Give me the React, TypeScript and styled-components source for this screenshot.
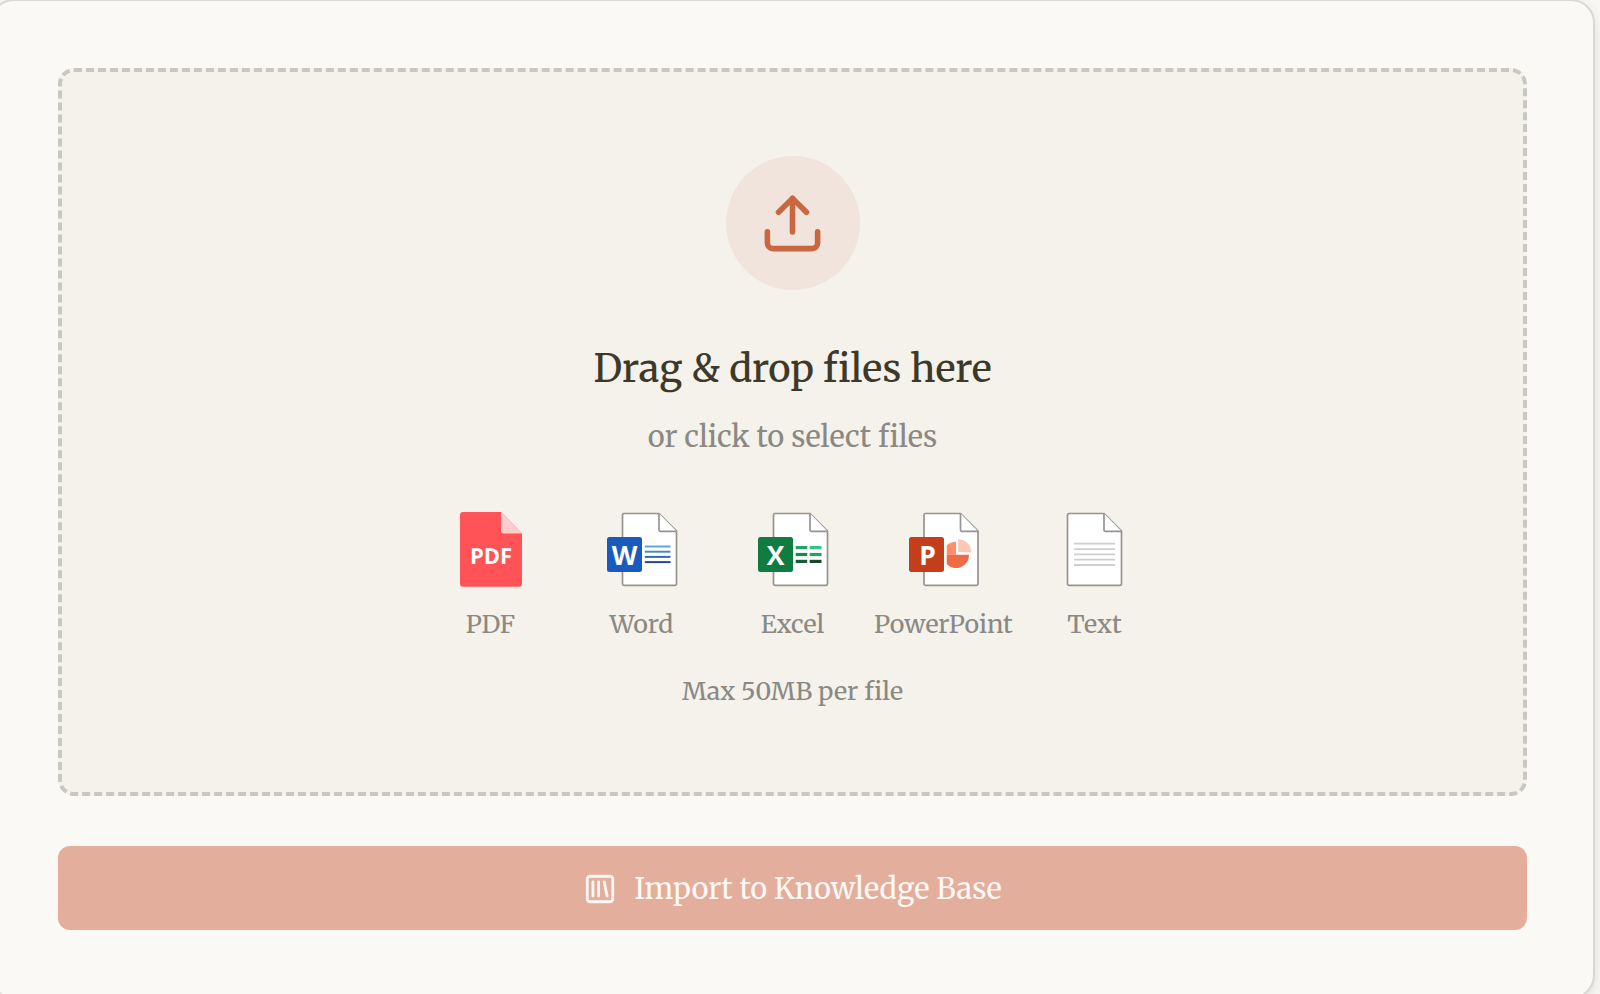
import React, { useState } from "react";
import styled, { createGlobalStyle } from "styled-components";
import { SquareLibrary, Upload } from "lucide-react";

const GlobalStyle = createGlobalStyle`
  *, *::before, *::after { box-sizing: border-box; }
  body {
    margin: 0;
    background: #f8f7f4;
    font-family: Merriweather, "DejaVu Serif Condensed", "DejaVu Serif", serif;
  }
`;

const Page = styled.main`
  height: 100vh;
  overflow: hidden;
`;

const Card = styled.section`
  display: flex;
  flex-direction: column;
  gap: 50px;
  margin: -1px 5px 0 -10px;
  padding: 67px 66px;
  background: #faf9f5;
  border: 2px solid #d9d8d4;
  border-radius: 24px;
  box-shadow: 0 4px 12px rgba(0, 0, 0, 0.1);
`;

const DropZone = styled.label`
  display: flex;
  flex-direction: column;
  align-items: center;
  padding: 84px 24px 83px;
  background: #f5f2eb;
  border: 4px dashed #c8c7c1;
  border-radius: 16px;
  cursor: pointer;
`;

const FileInput = styled.input`
  position: absolute;
  width: 1px;
  height: 1px;
  opacity: 0;
`;

const UploadBadge = styled.span`
  display: flex;
  align-items: center;
  justify-content: center;
  width: 134px;
  height: 134px;
  margin-bottom: 51px;
  border-radius: 50%;
  background: #f1e4dd;
  color: #c96741;
`;

const Title = styled.span`
  color: #3d3929;
  font-size: 38px;
  font-weight: 500;
  line-height: 56px;
`;

const Subtitle = styled.span`
  margin-top: 16px;
  color: #8a8984;
  font-size: 29px;
  line-height: 48px;
`;

const TypeList = styled.ul`
  display: grid;
  grid-template-columns: repeat(5, 151px);
  margin: 49px 0 31px;
  padding: 0;
  list-style: none;
`;

const TypeItem = styled.li`
  display: flex;
  flex-direction: column;
  align-items: center;
  gap: 16px;
`;

const Note = styled.span`
  color: #8a8984;
  font-size: 25px;
  line-height: 36px;
`;

const ImportButton = styled.button`
  display: flex;
  align-items: center;
  justify-content: center;
  gap: 17px;
  height: 84px;
  padding: 1px 0 0;
  border: 0;
  border-radius: 12px;
  background: #e3ae9b;
  color: #fdf8f5;
  font: inherit;
  font-size: 29px;
  line-height: 48px;
`;

const IconLetter = styled.text`
  fill: #ffffff;
  font-family: "Open Sans", "Noto Sans", sans-serif;
  font-weight: 700;
  text-anchor: middle;
  text-rendering: geometricPrecision;
`;

const FileIcon = ({ children }: { children: React.ReactNode }) => (
  <svg width="80" height="80" viewBox="0 0 80 80" aria-hidden="true">
    {children}
  </svg>
);

const Sheet = ({ x }: { x: number }) => (
  <g
    transform={`translate(${x} 0)`}
    fill="#ffffff"
    stroke="#979390"
    strokeWidth="1.7"
    strokeLinejoin="round"
  >
    <path d="M1.5 3.5H37L54.5 21V74Q54.5 75.3 53 75.3H2Q.5 75.3 .5 74V5Q.5 3.5 2 3.5Z" />
    <path d="M37 3.5V20Q37 21.3 38.3 21.3H54.5" />
  </g>
);

const AppBadge = ({ letter, fill, x = 22.5 }: { letter: string; fill: string; x?: number }) => (
  <>
    <rect x="5" y="27" width="35" height="35" rx="2.5" fill={fill} />
    <IconLetter x={x} y="54.7" fontSize="26.5">
      {letter}
    </IconLetter>
  </>
);

const PdfIcon = () => (
  <FileIcon>
    <path
      d="M12 1.9H50L71 23.4V73.7Q71 76.7 68 76.7H12Q9 76.7 9 73.7V4.9Q9 1.9 12 1.9Z"
      fill="#ff5358"
    />
    <path d="M50 1.9L71 23.4H53Q50 23.4 50 20.4Z" fill="#ffccce" />
    <IconLetter x="40" y="54" fontSize="22">
      PDF
    </IconLetter>
  </FileIcon>
);

const WordIcon = () => (
  <FileIcon>
    <Sheet x={20} />
    {["#5ea5dc", "#4a86c8", "#3566bb", "#234a90"].map((c, i) => (
      <path key={c} d={`M42.8 ${36.5 + i * 5.2}H68.5`} stroke={c} strokeWidth="2" />
    ))}
    <AppBadge letter="W" fill="#185abd" />
  </FileIcon>
);

const excelCells = [
  ["#21a366", "#33c481"],
  ["#178a50", "#21a366"],
  ["#185c37", "#134a2c"],
];

const ExcelIcon = () => (
  <FileIcon>
    <Sheet x={20} />
    {excelCells.map(([left, right], i) => (
      <g key={left}>
        <rect x="42.7" y={36 + i * 6.9} width="11.5" height="3.2" fill={left} />
        <rect x="56.7" y={36 + i * 6.9} width="11.8" height="3.2" fill={right} />
      </g>
    ))}
    <AppBadge letter="X" fill="#107c41" />
  </FileIcon>
);

const PowerPointIcon = () => (
  <FileIcon>
    <Sheet x={19.5} />
    <path d="M52 44.7V31.7Q46.5 31.8 42.7 35.4V44.7Z" fill="#ff8f6b" />
    <path d="M42.7 44.7H65A13 13 0 0 1 42.7 54Z" fill="#ed6c47" />
    <path d="M54.2 42.3V29.2A13.1 13.1 0 0 1 67.3 42.3Z" fill="#ffc7b5" />
    <AppBadge letter="P" fill="#c43e1c" x={23.5} />
  </FileIcon>
);

const TextIcon = () => (
  <FileIcon>
    <Sheet x={12} />
    {[0, 1, 2, 3, 4].map((i) => (
      <path key={i} d={`M19 ${33.7 + i * 5.33}H60`} stroke="#cfcfcf" strokeWidth="1.8" />
    ))}
  </FileIcon>
);

const fileTypes = [
  { label: "PDF", Icon: PdfIcon },
  { label: "Word", Icon: WordIcon },
  { label: "Excel", Icon: ExcelIcon },
  { label: "PowerPoint", Icon: PowerPointIcon },
  { label: "Text", Icon: TextIcon },
];

export default function App() {
  const [, setFiles] = useState<FileList | null>(null);
  return (
    <Page>
      <GlobalStyle />
      <Card>
        <DropZone>
          <FileInput type="file" multiple onChange={(e) => setFiles(e.target.files)} />
          <UploadBadge>
            <Upload size={67} />
          </UploadBadge>
          <Title>Drag &amp; drop files here</Title>
          <Subtitle>or click to select files</Subtitle>
          <TypeList>
            {fileTypes.map(({ label, Icon }) => (
              <TypeItem key={label}>
                <Icon />
                <Note>{label}</Note>
              </TypeItem>
            ))}
          </TypeList>
          <Note>Max 50MB per file</Note>
        </DropZone>
        <ImportButton type="button">
          <SquareLibrary size={34} />
          Import to Knowledge Base
        </ImportButton>
      </Card>
    </Page>
  );
}
